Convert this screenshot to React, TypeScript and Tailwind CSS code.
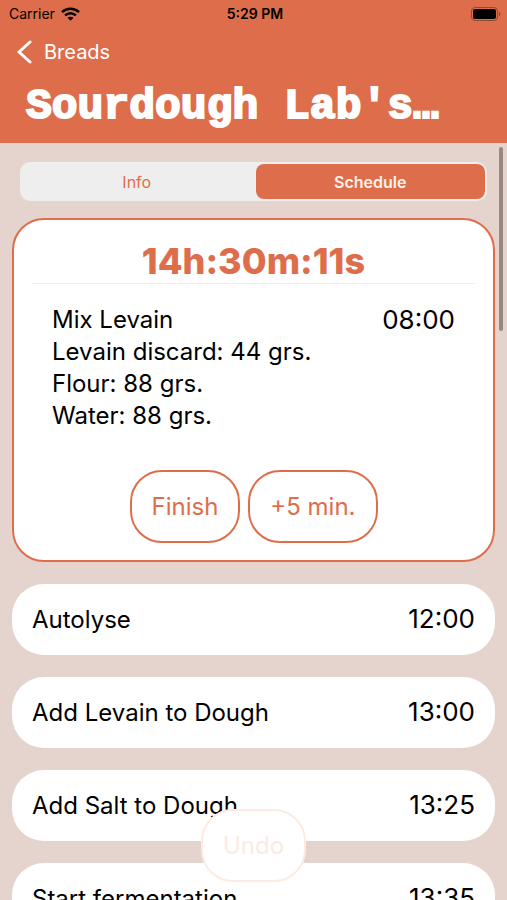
type Step = { name: string; time: string };

const ingredients = ['Levain discard: 44 grs.', 'Flour: 88 grs.', 'Water: 88 grs.'];

const steps: Step[] = [
  { name: 'Autolyse', time: '12:00' },
  { name: 'Add Levain to Dough', time: '13:00' },
  { name: 'Add Salt to Dough', time: '13:25' },
  { name: 'Start fermentation', time: '13:35' },
];

function WifiIcon() {
  return (
    <svg width="19" height="14" viewBox="0 0 19 14" fill="none" stroke="black" strokeWidth="2.5" aria-hidden="true">
      <path d="M1 5.1C5.8.6 13.2.6 18 5.1" />
      <path d="M4.1 8.4c3.1-2.9 7.7-2.9 10.8 0" />
      <path d="M9.5 13.8 6.5 10.8c1.7-1.5 4.3-1.5 6 0z" fill="black" stroke="none" />
    </svg>
  );
}

function BatteryIcon() {
  return (
    <svg width="30" height="14" viewBox="0 0 30 14" aria-hidden="true">
      <rect x="0.5" y="0.5" width="26" height="13" rx="3.5" fill="none" stroke="#8f4a35" />
      <rect x="2" y="2" width="23" height="10" rx="2" fill="black" />
      <path d="M28 5c2 .6 2 3.4 0 4z" fill="#8f4a35" />
    </svg>
  );
}

function StatusBar() {
  return (
    <div className="grid h-7 grid-cols-3 items-center pr-1.5 pl-[9px] text-sm text-black">
      <div className="flex items-center gap-1.5">
        <span>Carrier</span>
        <WifiIcon />
      </div>
      <span className="text-center font-semibold">5:29 PM</span>
      <div className="flex justify-end">
        <BatteryIcon />
      </div>
    </div>
  );
}

function Header() {
  return (
    <header className="shrink-0 bg-[#de6e4b] pb-1.5 text-white">
      <StatusBar />
      <a href="#breads" className="ml-4 inline-flex h-12 items-center gap-3 text-xl">
        <svg width="16" height="24" viewBox="0 0 16 24" fill="none" stroke="white" strokeWidth="3" strokeLinecap="round" strokeLinejoin="round" aria-hidden="true">
          <path d="M14 2 3 12l11 10" />
        </svg>
        Breads
      </a>
      <h1 className="px-[26px] font-['Liberation_Mono',monospace] text-[43px] leading-[61px] font-bold whitespace-nowrap [-webkit-text-stroke:2px_white]">
        Sourdough Lab's…
      </h1>
    </header>
  );
}

function CurrentStep() {
  return (
    <section className="rounded-[32px] border-2 border-[#de6e4b] bg-white px-[18px] pt-[21px] pb-[17px]">
      <h2 className="border-b border-[#eeeeee] pb-0.5 text-center text-4xl font-extrabold text-[#de6e4b]">
        14h:30m:11s
      </h2>
      <div className="px-5 pt-5 text-2xl leading-8">
        <div className="flex justify-between">
          <span>Mix Levain</span>
          <time className="text-[26px]">08:00</time>
        </div>
        {ingredients.map((item) => (
          <p key={item}>{item}</p>
        ))}
      </div>
      <div className="mt-[38px] flex justify-center gap-2 text-2xl text-[#de6e4b]">
        <button type="button" className="h-[73px] rounded-[32px] border-2 border-[#de6e4b] px-5">
          Finish
        </button>
        <button type="button" className="h-[73px] rounded-[32px] border-2 border-[#de6e4b] px-5">
          +5 min.
        </button>
      </div>
    </section>
  );
}

export default function App() {
  return (
    <div className="relative flex h-screen flex-col overflow-hidden bg-[#e5d3cd] font-['Inter',sans-serif] text-black">
      <Header />
      <main className="relative min-h-0 flex-1 overflow-hidden px-3 pt-[19px]">
        <div className="mx-2 flex gap-1 rounded-[10px] bg-[#eeeeee] p-0.5 text-base">
          <button type="button" className="h-[35px] flex-1 rounded-lg text-[#de6e4b]">
            Info
          </button>
          <button type="button" aria-pressed="true" className="h-[35px] flex-1 rounded-lg bg-[#de6e4b] font-semibold text-[#fff0ea]">
            Schedule
          </button>
        </div>
        <div className="mt-[17px] flex flex-col gap-[22px]">
          <CurrentStep />
          <ul className="flex flex-col gap-[22px]">
            {steps.map((step) => (
              <li key={step.name} className="flex h-[71px] items-center justify-between rounded-[32px] bg-white px-5 text-2xl">
                <span>{step.name}</span>
                <time className="text-[26px]">{step.time}</time>
              </li>
            ))}
          </ul>
        </div>
        <div className="absolute top-1 right-1 h-[184px] w-1 rounded-full bg-[#968983]" />
      </main>
      <div className="absolute inset-x-0 bottom-[18px] flex justify-center">
        <button type="button" className="h-[73px] rounded-[32px] border-2 border-[#fdeae2] bg-white px-5 text-2xl text-[#fdeae2]">
          Undo
        </button>
      </div>
    </div>
  );
}
